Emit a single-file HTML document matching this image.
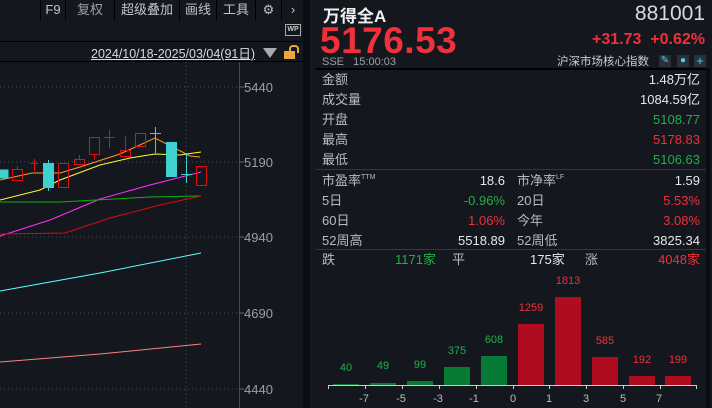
<!DOCTYPE html>
<html><head><meta charset="utf-8"><style>
body{margin:0;width:712px;height:408px;background:#14171d;overflow:hidden;font-family:"Liberation Sans","Noto Sans CJK SC",sans-serif;color:#c8ccd2;position:relative}
.a{position:absolute;white-space:nowrap;line-height:16px}
.tb{position:absolute;top:0;height:20px;line-height:20px;font-size:13px;color:#c0c4ca;text-align:center;border-left:1px solid #000}
.r{text-align:right}
.lab{font-size:13px;color:#b8bcc2}
.val{font-size:13px;color:#e6e8ea}
.g{color:#1fb04a}.rd{color:#f0303a}
sup{font-size:7px;line-height:0;vertical-align:6px}
</style></head><body>
<div class="tb" style="left:40px;width:24px">F9</div>
<div class="tb" style="left:65px;width:48px;color:#9aa0a6">复权</div>
<div class="tb" style="left:114px;width:64px">超级叠加</div>
<div class="tb" style="left:179px;width:36px">画线</div>
<div class="tb" style="left:216px;width:38px">工具</div>
<div class="tb" style="left:255px;width:25px">⚙</div>
<div class="tb" style="left:281px;width:22px">›</div>
<div class="a" style="left:0;top:41px;width:303px;height:1px;background:#000"></div>
<div class="a" style="left:285px;top:24px;width:14px;height:10px;border:1px solid #aaa;font-size:7px;line-height:10px;text-align:center;color:#ccc;font-weight:bold">WP</div>
<div class="a" style="left:91px;top:46px;font-size:12.5px;color:#d8dadd;text-decoration:underline">2024/10/18-2025/03/04(91日)</div>
<div class="a" style="left:263px;top:48px;width:0;height:0;border-left:7px solid transparent;border-right:7px solid transparent;border-top:10px solid #aaa"></div>
<div class="a" style="left:284px;top:51px;width:11px;height:8px;background:#e8a83a"></div>
<div class="a" style="left:289px;top:45px;width:6px;height:6px;border:2px solid #e8a83a;border-bottom:none;border-radius:4px 4px 0 0"></div>
<div class="a" style="left:0;top:61px;width:303px;height:1px;background:#000"></div>
<div class="a" style="left:303px;top:0;width:7px;height:408px;background:#0a0c10"></div>
<svg class="a" style="left:0;top:62px" width="303" height="346">
<g transform="translate(0,-62)">
<g stroke="#444a52" stroke-dasharray="1,3" stroke-width="1">
<line x1="0" y1="87" x2="239" y2="87"/><line x1="0" y1="162" x2="239" y2="162"/><line x1="0" y1="237" x2="239" y2="237"/><line x1="0" y1="313" x2="239" y2="313"/><line x1="0" y1="389" x2="239" y2="389"/><line x1="186" y1="62" x2="186" y2="408"/></g>
<line x1="239.5" y1="62" x2="239.5" y2="408" stroke="#444a52"/>
<g stroke="#666" ><line x1="239" y1="87" x2="244" y2="87"/><line x1="239" y1="162" x2="244" y2="162"/><line x1="239" y1="237" x2="244" y2="237"/><line x1="239" y1="313" x2="244" y2="313"/><line x1="239" y1="389" x2="244" y2="389"/></g>
<g font-size="13" fill="#9aa0a6" font-family="Liberation Sans"><text x="244" y="92">5440</text><text x="244" y="167">5190</text><text x="244" y="242">4940</text><text x="244" y="318">4690</text><text x="244" y="394">4440</text></g>
<g fill="none" stroke-width="1">
<polyline stroke="#ff9a1a" points="0,180 32,173 60,173 80,167 120,154 155,138 190,156 200,157"/>
<polyline stroke="#ffff30" points="0,200 40,190 60,180 100,165 130,158 155,154 180,155 201,152"/>
<polyline stroke="#ff30ff" points="0,236 50,220 100,199 150,185 201,172"/>
<polyline stroke="#10b010" points="0,202 60,202 150,197 201,196"/>
<polyline stroke="#d01010" points="0,234 65,233 110,218 160,205 201,196"/>
<polyline stroke="#60ffff" points="0,291 100,273 201,253"/>
<polyline stroke="#ff8080" points="0,362 100,354 201,344"/>
</g>
<g fill="#3fd0d0" stroke="#3fd0d0">
<rect x="0" y="170" width="8" height="8"/>
<rect x="43.5" y="163.5" width="10" height="24"/><line x1="48.5" y1="160" x2="48.5" y2="191"/>
<rect x="166.5" y="142.5" width="10" height="34"/>
<line x1="155.5" y1="127" x2="155.5" y2="153"/><line x1="150" y1="133.5" x2="161" y2="133.5"/>
<line x1="186.5" y1="153" x2="186.5" y2="183"/><line x1="181" y1="174.5" x2="192" y2="174.5"/>
</g>
<g fill="none" stroke="#e01010">
<rect x="12.5" y="169.5" width="10" height="11"/><line x1="17.5" y1="166" x2="17.5" y2="169"/>
<line x1="34.5" y1="159" x2="34.5" y2="171"/><line x1="30" y1="163.5" x2="38" y2="163.5"/>
<rect x="58.5" y="163.5" width="10" height="24"/>
<rect x="74.5" y="159.5" width="10" height="5"/><line x1="79.5" y1="155" x2="79.5" y2="159"/>
<rect x="89.5" y="137.5" width="10" height="17"/><line x1="94.5" y1="154" x2="94.5" y2="160"/>
<line x1="109.5" y1="130" x2="109.5" y2="148"/><line x1="104" y1="137.5" x2="115" y2="137.5"/>
<rect x="120.5" y="150.5" width="10" height="6"/><line x1="125.5" y1="136" x2="125.5" y2="150"/>
<rect x="135.5" y="133.5" width="10" height="13"/>
<rect x="196.5" y="166.5" width="10" height="19"/>
</g></g></svg>

<div class="a" style="left:323px;top:7px;font-size:17px;line-height:20px;font-weight:bold;color:#f0f0f0">万得全A</div>
<div class="a" style="right:7px;top:2px;font-size:21px;line-height:24px;color:#d8dadd">881001</div>
<div class="a rd" style="left:320px;top:22px;font-size:37px;line-height:38px;font-weight:bold;letter-spacing:0.5px">5176.53</div>
<div class="a rd" style="right:7px;top:31px;font-size:16px;line-height:18px;font-weight:bold">+31.73&nbsp;&nbsp;+0.62%</div>
<div class="a" style="left:322px;top:54px;font-size:11px;color:#9aa0a6">SSE&nbsp;&nbsp;&nbsp;15:00:03</div>
<div class="a" style="left:557px;top:54px;font-size:11.5px;color:#c8ccd2">沪深市场核心指数</div>
<div class="a" style="left:659px;top:55px;width:12px;height:12px;background:#2a3038;color:#4ad0e0;font-size:10px;line-height:12px;text-align:center">✎</div>
<div class="a" style="left:677px;top:55px;width:12px;height:12px;background:#2a3038;color:#4ad0e0;font-size:10px;line-height:12px;text-align:center">●</div>
<div class="a" style="left:694px;top:55px;width:12px;height:12px;background:#2a3038;color:#4ad0e0;font-size:13px;line-height:12px;text-align:center">+</div>
<div class="a" style="left:316px;top:68px;width:390px;height:2px;background:#000"></div>
<div class="a" style="left:706px;top:68px;width:4px;height:340px;background:#0a0c10"></div>

<div class="a lab" style="left:322px;top:72px">金额</div><div class="a val r" style="right:12px;top:72px">1.48万亿</div>
<div class="a lab" style="left:322px;top:92px">成交量</div><div class="a val r" style="right:12px;top:92px">1084.59亿</div>
<div class="a lab" style="left:322px;top:112px">开盘</div><div class="a val r g" style="right:12px;top:112px">5108.77</div>
<div class="a lab" style="left:322px;top:132px">最高</div><div class="a val r rd" style="right:12px;top:132px">5178.83</div>
<div class="a lab" style="left:322px;top:152px">最低</div><div class="a val r g" style="right:12px;top:152px">5106.63</div>
<div class="a" style="left:316px;top:169px;width:390px;height:1px;background:#333840"></div>

<div class="a lab" style="left:322px;top:173px">市盈率<sup>TTM</sup></div><div class="a val r" style="right:207px;top:173px">18.6</div>
<div class="a lab" style="left:517px;top:173px">市净率<sup>LF</sup></div><div class="a val r" style="right:12px;top:173px">1.59</div>
<div class="a lab" style="left:322px;top:193px">5日</div><div class="a val r g" style="right:207px;top:193px">-0.96%</div>
<div class="a lab" style="left:517px;top:193px">20日</div><div class="a val r rd" style="right:12px;top:193px">5.53%</div>
<div class="a lab" style="left:322px;top:213px">60日</div><div class="a val r rd" style="right:207px;top:213px">1.06%</div>
<div class="a lab" style="left:517px;top:213px">今年</div><div class="a val r rd" style="right:12px;top:213px">3.08%</div>
<div class="a lab" style="left:322px;top:233px">52周高</div><div class="a val r" style="right:207px;top:233px">5518.89</div>
<div class="a lab" style="left:517px;top:233px">52周低</div><div class="a val r" style="right:12px;top:233px">3825.34</div>
<div class="a" style="left:316px;top:249px;width:390px;height:1px;background:#333840"></div>
<div class="a lab" style="left:322px;top:252px">跌</div><div class="a val g" style="left:395px;top:252px">1171家</div>
<div class="a lab" style="left:452px;top:252px">平</div><div class="a val" style="left:530px;top:252px">175家</div>
<div class="a lab" style="left:585px;top:252px">涨</div><div class="a val r rd" style="right:12px;top:252px">4048家</div>

<svg class="a" style="left:310px;top:270px" width="396" height="138" font-family="Liberation Sans" font-size="11" text-anchor="middle">
<g transform="translate(-310,-270)">
<g fill="#077a35"><rect x="333" y="384" width="26" height="1"/><rect x="370" y="383" width="26" height="2"/><rect x="407" y="381" width="26" height="4"/><rect x="444" y="367" width="26" height="18"/><rect x="481" y="356" width="26" height="29"/></g>
<g fill="#b00c20"><rect x="518" y="324" width="26" height="61"/><rect x="555" y="297" width="26" height="88"/><rect x="592" y="357" width="26" height="28"/><rect x="629" y="376" width="26" height="9"/><rect x="665" y="376" width="26" height="9"/></g>
<g fill="#1fb04a"><text x="346" y="371">40</text><text x="383" y="369">49</text><text x="420" y="368">99</text><text x="457" y="354">375</text><text x="494" y="343">608</text></g>
<g fill="#f0303a"><text x="531" y="311">1259</text><text x="568" y="284">1813</text><text x="605" y="344">585</text><text x="642" y="363">192</text><text x="678" y="363">199</text></g>
<line x1="328" y1="385.5" x2="697" y2="385.5" stroke="#ccc"/>
<g stroke="#ccc"><line x1="328.5" y1="385" x2="328.5" y2="389"/><line x1="365.5" y1="385" x2="365.5" y2="389"/><line x1="402.5" y1="385" x2="402.5" y2="389"/><line x1="439.5" y1="385" x2="439.5" y2="389"/><line x1="476.5" y1="385" x2="476.5" y2="389"/><line x1="513.5" y1="385" x2="513.5" y2="389"/><line x1="549.5" y1="385" x2="549.5" y2="389"/><line x1="586.5" y1="385" x2="586.5" y2="389"/><line x1="623.5" y1="385" x2="623.5" y2="389"/><line x1="660.5" y1="385" x2="660.5" y2="389"/><line x1="696.5" y1="385" x2="696.5" y2="389"/></g>
<g fill="#b8bcc2"><text x="364" y="402">-7</text><text x="401" y="402">-5</text><text x="438" y="402">-3</text><text x="474" y="402">-1</text><text x="513" y="402">0</text><text x="549" y="402">1</text><text x="586" y="402">3</text><text x="623" y="402">5</text><text x="659" y="402">7</text></g>
</g></svg>
</body></html>
